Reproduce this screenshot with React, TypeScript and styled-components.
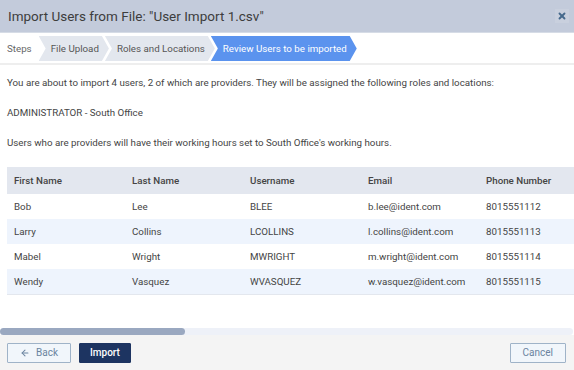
import * as React from "react"
import styled, { createGlobalStyle } from "styled-components"
import { ArrowLeft, X } from "lucide-react"

const GlobalStyle = createGlobalStyle`
  html, body {
    margin: 0;
    padding: 0;
    background: #ffffff;
  }
  body {
    font-family: Roboto, "Liberation Sans", sans-serif;
    color: #444;
  }
`

const Dialog = styled.div`
  width: 574px;
  height: 370px;
  display: flex;
  flex-direction: column;
  overflow: hidden;
  background: #fff;
`

const Header = styled.div`
  height: 33px;
  flex-shrink: 0;
  display: flex;
  align-items: center;
  justify-content: space-between;
  padding: 0 5px 0 8px;
  background: #c3cbdb;
  border-bottom: 1px solid #d6dce6;
  box-sizing: border-box;
`

const Title = styled.h1`
  margin: 0;
  font-size: 13.5px;
  font-weight: 400;
  color: #3d3d3d;
`

const CloseButton = styled.button`
  width: 14px;
  height: 14px;
  padding: 0;
  border: none;
  background: #c9d0de;
  color: #46698c;
  display: flex;
  align-items: center;
  justify-content: center;
`

const StepBar = styled.div`
  display: flex;
  align-items: center;
  flex-shrink: 0;
  height: 25px;
  margin-top: 3px;
  padding-bottom: 2px;
  border-bottom: 2px solid #eeeeee;
`

const StepsLabel = styled.span`
  font-size: 9.75px;
  color: #666;
  padding: 0 7px 0 7px;
`

const Step = styled.div<{ $active?: boolean }>`
  height: 25px;
  display: flex;
  align-items: center;
  padding: 0 10px 0 12px;
  margin-left: -4px;
  font-size: 9.75px;
  background: ${({ $active }) => ($active ? "#5b93ee" : "#e3e7ee")};
  color: ${({ $active }) => ($active ? "#ffffff" : "#555")};
  clip-path: polygon(0 0, calc(100% - 7px) 0, 100% 50%, calc(100% - 7px) 100%, 0 100%, 7px 50%);

  &:first-of-type {
    margin-left: 0;
  }
`

const Body = styled.div`
  flex: 1;
  display: flex;
  flex-direction: column;
  min-height: 0;
`

const Intro = styled.div`
  padding: 11px 7px 0;
  font-size: 9.75px;
  color: #444;

  p {
    margin: 0 0 17px;
    line-height: 13px;
  }
`

const TableScroll = styled.div`
  flex: 1;
  display: flex;
  flex-direction: column;
  min-height: 0;
`

const Viewport = styled.div`
  flex: 1;
  overflow: hidden;
  padding: 1px 0 0 7px;
`

const ScrollTrack = styled.div`
  height: 7px;
  margin-right: 1px;
  background: #eef1f8;
  border-radius: 4px;
`

const ScrollThumb = styled.div`
  height: 100%;
  background: #9aa8c0;
  border-radius: 4px;
`

const Table = styled.table`
  width: 1770px;
  border-collapse: collapse;
  table-layout: fixed;
  font-size: 9.75px;
  border-bottom: 1px solid #e3e7ee;
`

const HeadCell = styled.th`
  width: 104px;
  height: 27px;
  padding: 0 7px;
  text-align: left;
  font-weight: 500;
  color: #444;
  background: #e3e7ef;
  white-space: nowrap;
`

const Row = styled.tr<{ $striped?: boolean }>`
  background: ${({ $striped }) => ($striped ? "#eef4fd" : "#ffffff")};
`

const Cell = styled.td`
  height: 25px;
  padding: 0 7px;
  color: #444;
  white-space: nowrap;
`

const Footer = styled.div`
  height: 35px;
  flex-shrink: 0;
  display: flex;
  align-items: center;
  gap: 8px;
  padding: 0 8px 0 7px;
  background: #f4f4f4;
`

const Button = styled.button<{ $variant?: "primary" | "secondary" }>`
  height: 20px;
  display: flex;
  align-items: center;
  justify-content: center;
  gap: 6px;
  padding: 0 ${({ $variant }) => ($variant === "primary" ? "10px" : "12px")};
  font-family: Roboto, "Liberation Sans", sans-serif;
  font-size: 10px;
  border-radius: 1px;
  border: 1px solid ${({ $variant }) => ($variant === "primary" ? "#1d3461" : "#9fb3c8")};
  background: ${({ $variant }) => ($variant === "primary" ? "#1d3461" : "#f1f6fb")};
  color: ${({ $variant }) => ($variant === "primary" ? "#ffffff" : "#6b84a0")};
  font-weight: ${({ $variant }) => ($variant === "primary" ? 500 : 400)};
`

const Spacer = styled.div`
  flex: 1;
`

const users = [
  { first: "Bob", last: "Lee", username: "BLEE", email: "b.lee@ident.com", phone: "8015551112" },
  { first: "Larry", last: "Collins", username: "LCOLLINS", email: "l.collins@ident.com", phone: "8015551113" },
  { first: "Mabel", last: "Wright", username: "MWRIGHT", email: "m.wright@ident.com", phone: "8015551114" },
  { first: "Wendy", last: "Vasquez", username: "WVASQUEZ", email: "w.vasquez@ident.com", phone: "8015551115" },
]

const columns = ["First Name", "Last Name", "Username", "Email", "Phone Number"]
const hiddenColumns = ["Provider", "Title", "Address", "City", "State", "Zip", "NPI", "DEA", "License", "Notes"]

const visibleWidth = 574
const tableWidth = 1777
const thumbWidth = Math.round((visibleWidth / tableWidth) * visibleWidth)

export default function App() {
  return (
    <>
      <GlobalStyle />
      <Dialog>
        <Header>
          <Title>Import Users from File: "User Import 1.csv"</Title>
          <CloseButton>
            <X size={10} strokeWidth={4.5} />
          </CloseButton>
        </Header>

        <StepBar>
          <StepsLabel>Steps</StepsLabel>
          <Step>File Upload</Step>
          <Step>Roles and Locations</Step>
          <Step $active>Review Users to be imported</Step>
        </StepBar>

        <Body>
          <Intro>
            <p>
              You are about to import 4 users, 2 of which are providers. They will be assigned the following roles
              and locations:
            </p>
            <p>ADMINISTRATOR - South Office</p>
            <p>Users who are providers will have their working hours set to South Office's working hours.</p>
          </Intro>

          <TableScroll>
            <Viewport>
              <Table>
                <thead>
                  <tr>
                    {columns.map((c) => (
                      <HeadCell key={c}>{c}</HeadCell>
                    ))}
                    {hiddenColumns.map((c) => (
                      <HeadCell key={c} aria-hidden />
                    ))}
                  </tr>
                </thead>
                <tbody>
                  {users.map((u, i) => (
                    <Row key={u.username} $striped={i % 2 === 1}>
                      <Cell>{u.first}</Cell>
                      <Cell>{u.last}</Cell>
                      <Cell>{u.username}</Cell>
                      <Cell>{u.email}</Cell>
                      <Cell>{u.phone}</Cell>
                      {hiddenColumns.map((c) => (
                        <Cell key={c} />
                      ))}
                    </Row>
                  ))}
                </tbody>
              </Table>
            </Viewport>
            <ScrollTrack>
              <ScrollThumb style={{ width: thumbWidth }} />
            </ScrollTrack>
          </TableScroll>
        </Body>

        <Footer>
          <Button $variant="secondary">
            <ArrowLeft size={10} strokeWidth={2.5} />
            Back
          </Button>
          <Button $variant="primary">Import</Button>
          <Spacer />
          <Button $variant="secondary">Cancel</Button>
        </Footer>
      </Dialog>
    </>
  )
}
